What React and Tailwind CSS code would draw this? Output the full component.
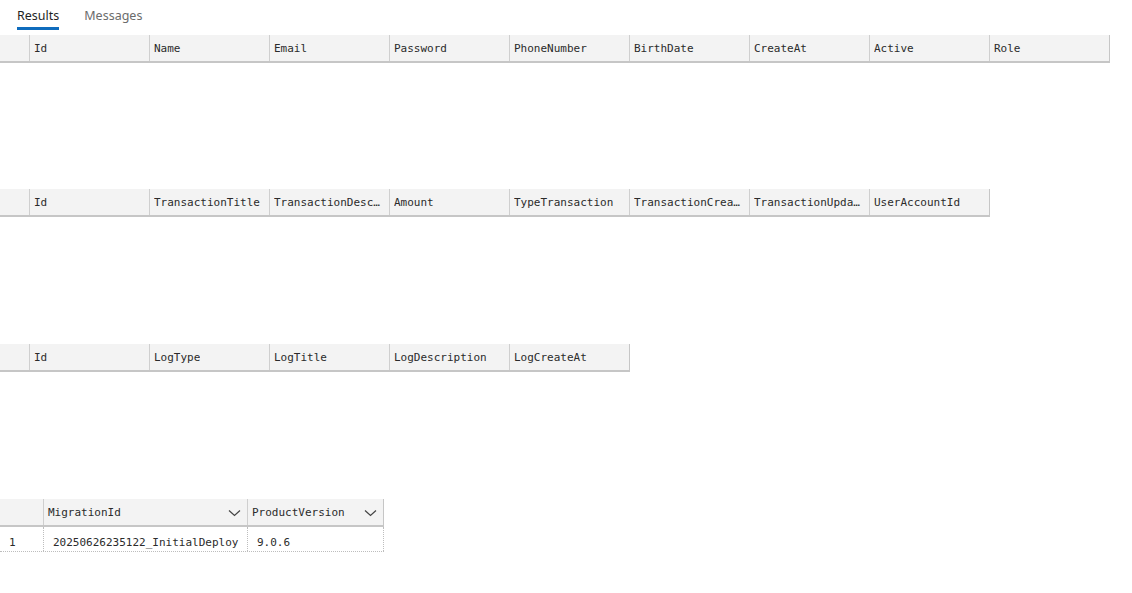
import React from "react";

const mono = { fontFamily: '"DejaVu Sans Mono", "Liberation Mono", monospace' };

function HeaderTable({ cols }) {
  return (
    <div className="flex h-[28px] w-max bg-[#f3f3f3] border-b-2 border-[#c6c6c6] text-[11px] text-[#2b2b2b]" style={mono}>
      <div className="w-[30px] border-r border-[#cfcfcf]" />
      {cols.map((c, i) => (
        <div
          key={i}
          className={`w-[120px] pl-[4px] pr-[6px] pt-[2px] flex items-center overflow-hidden border-r ${i === cols.length - 1 ? "border-[#c6c6c6]" : "border-[#cfcfcf]"}`}
        >
          <span className="truncate">{c}</span>
        </div>
      ))}
    </div>
  );
}

function Chevron() {
  return (
    <svg width="13" height="8" viewBox="0 0 13 8" fill="none">
      <path d="M1 1.5 L6.5 6.5 L12 1.5" stroke="#444" strokeWidth="1.2" />
    </svg>
  );
}

export default function App() {
  return (
    <div className="w-[1132px] h-[593px] bg-white overflow-hidden">
      <div className="flex h-[35px] pl-[17px] gap-[25px] text-[12.5px]" style={{ fontFamily: '"Noto Sans", "Open Sans", sans-serif' }}>
        <div className="relative pt-[7px] text-[#1f1f1f]">
          Results
          <div className="absolute left-0 right-0 top-[27px] h-[3px] bg-[#0f6cbd]" />
        </div>
        <div className="pt-[7px] text-[#6b6b6b]">Messages</div>
      </div>

      <div className="h-[154px]">
        <HeaderTable cols={["Id", "Name", "Email", "Password", "PhoneNumber", "BirthDate", "CreateAt", "Active", "Role"]} />
      </div>
      <div className="h-[155px]">
        <HeaderTable cols={["Id", "TransactionTitle", "TransactionDescription", "Amount", "TypeTransaction", "TransactionCreateAt", "TransactionUpdateAt", "UserAccountId"]} />
      </div>
      <div className="h-[155px]">
        <HeaderTable cols={["Id", "LogType", "LogTitle", "LogDescription", "LogCreateAt"]} />
      </div>

      <div className="w-max text-[11px] text-[#2b2b2b]" style={mono}>
        <div className="flex h-[28px] bg-[#f3f3f3] border-b-2 border-[#c6c6c6]">
          <div className="w-[44px] border-r border-[#cfcfcf]" />
          <div className="w-[204px] pl-[4px] pr-[6px] pt-[2px] flex items-center justify-between border-r border-[#cfcfcf]">
            <span>MigrationId</span>
            <Chevron />
          </div>
          <div className="w-[136px] pl-[4px] pr-[6px] pt-[2px] flex items-center justify-between border-r border-[#c6c6c6]">
            <span>ProductVersion</span>
            <Chevron />
          </div>
        </div>
        <div className="flex h-[25px] border-b border-dotted border-[#bdbdbd]">
          <div className="w-[44px] pl-[9px] pt-[9px] flex items-center border-r border-dotted border-[#bdbdbd]">1</div>
          <div className="w-[204px] pl-[9px] pt-[9px] flex items-center border-r border-dotted border-[#bdbdbd]">20250626235122_InitialDeploy</div>
          <div className="w-[136px] pl-[9px] pt-[9px] flex items-center border-r border-dotted border-[#bdbdbd]">9.0.6</div>
        </div>
      </div>
    </div>
  );
}
